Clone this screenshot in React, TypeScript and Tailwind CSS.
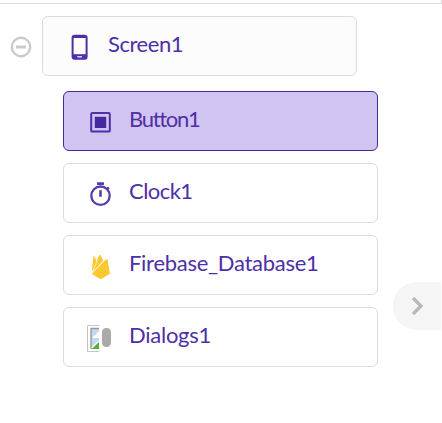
import type { ReactNode } from 'react'
import clsx from 'clsx'

interface TreeNode {
  name: string
  icon: ReactNode
  labelClass: string
  selected?: boolean
}

function PhoneIcon() {
  return (
    <svg className="w-6 h-7" viewBox="0 0 24 28" fill="none">
      <rect x="4.6" y="1.7" width="16" height="25" rx="3" fill="#4f2fa6" />
      <path d="M6.6 5h12v16.2h-12z" fill="#fcfcfc" />
      <path d="M10.2 23.8h4.8" stroke="#e4def2" strokeWidth="1.4" />
    </svg>
  )
}

function ButtonIcon() {
  return (
    <svg className="w-6 h-7" viewBox="0 0 24 28" fill="none">
      <rect x="3.2" y="5" width="18.6" height="18.6" rx="1.2" stroke="#4f2fa6" strokeWidth="2" />
      <rect x="6.8" y="8.8" width="11.4" height="11.2" fill="#4527a0" />
    </svg>
  )
}

function ClockIcon() {
  return (
    <svg className="w-6 h-7" viewBox="0 0 24 28" fill="none" stroke="#5a3bac" strokeWidth="2.3">
      <circle cx="12.5" cy="15.7" r="9.2" />
      <path d="M9 3.6h7M12.5 10.2v6.6M18.8 9.4l2-2" strokeWidth="2.6" />
    </svg>
  )
}

function FirebaseIcon() {
  return (
    <svg className="w-6 h-7" viewBox="0 0 24 28" fill="#fdc82f">
      <path d="M3.8 19.8 5.3 5q.5-1.5 1.4-.2l2.2 5.4z" />
      <path d="M4 20.8 11.2 3.3q.7-1.3 1.4 0l2.7 5.5z" />
      <path d="M3.7 21.8 17.8 7.6q1.5-.9 1.8.6L22 21.8l-7.9 4.7q-1.4.7-2.8 0z" />
      <path d="M4.1 20.8 9.5 8.5M4 21.5 16.4 7.7" stroke="#fff" strokeWidth=".5" />
    </svg>
  )
}

function BrokenImageIcon() {
  return (
    <svg className="w-6 h-7 overflow-visible" viewBox="0 0 24 28" fill="none">
      <path d="M11 1.5H-.5v26H11" stroke="#c4c4c4" />
      <path d="M3 4h8v21H3z" fill="#c3d7f5" />
      <path d="M5 14c0-2 1.5-3 3-3 .4-2 1.5-3 3-3v6z" fill="#fff" />
      <path d="m3 25 8-7v7z" fill="#55b22e" />
      <path d="M11 4.5H3V25" stroke="#999" strokeWidth="1.4" />
      <path d="m3.8 24 7.2-7.2" stroke="#f5f8fc" strokeWidth="1.3" />
      <rect x="14" y="4" width="9" height="19" rx="4.2" fill="#aaa" />
    </svg>
  )
}

const children: TreeNode[] = [
  { name: 'Button1', icon: <ButtonIcon />, labelClass: 'tracking-[-1.3px]', selected: true },
  { name: 'Clock1', icon: <ClockIcon />, labelClass: 'tracking-[-0.55px]' },
  { name: 'Firebase_Database1', icon: <FirebaseIcon />, labelClass: 'tracking-[-0.28px]' },
  { name: 'Dialogs1', icon: <BrokenImageIcon />, labelClass: 'tracking-[-0.25px]' },
]

function NodeCard({ node, root }: { node: TreeNode; root?: boolean }) {
  return (
    <div
      className={clsx(
        'flex h-[60px] w-[315px] items-center rounded-md border pl-6',
        node.selected ? 'border-[#4527a0] bg-[#d1c4f1]' : 'border-[#dcdcdc]',
        root && 'bg-[#fcfcfc]',
        !root && !node.selected && 'bg-white'
      )}
    >
      <span className="mt-0.5 shrink-0">{node.icon}</span>
      <span className={clsx('mb-1 ml-[17px] text-[22px] leading-7 whitespace-nowrap text-[#4e2fa6]', node.labelClass)}>
        {node.name}
      </span>
    </div>
  )
}

export default function App() {
  return (
    <div className="relative h-[423px] w-[442px] overflow-hidden bg-white font-['Lato',sans-serif]">
      <div className="h-1 w-[442px] border-r border-b border-[#dcdcdc]" />

      {/* Component tree */}
      <div className="flex items-center pt-3">
        <svg className="ml-[9px] mr-[9px] size-6" viewBox="0 0 24 24" fill="none" stroke="#cacaca" strokeWidth="2.4">
          <circle cx="12" cy="13" r="9.2" />
          <path d="M7 13h10" strokeWidth="3" />
        </svg>
        <NodeCard
          root
          node={{ name: 'Screen1', icon: <PhoneIcon />, labelClass: 'tracking-[-0.45px]' }}
        />
      </div>
      <div className="mt-[15px] ml-[63px] flex flex-col gap-3">
        {children.map((node) => (
          <NodeCard key={node.name} node={node} />
        ))}
      </div>

      {/* Drawer handle */}
      <button className="absolute top-[282px] right-px flex h-12 w-12 items-center rounded-l-full bg-[#f5f5f5] pl-3">
        <svg className="size-6" viewBox="0 0 24 24" fill="none" stroke="#b8b8b8" strokeWidth="3.2">
          <path d="m8 4 8 8-8 8" />
        </svg>
      </button>
    </div>
  )
}
